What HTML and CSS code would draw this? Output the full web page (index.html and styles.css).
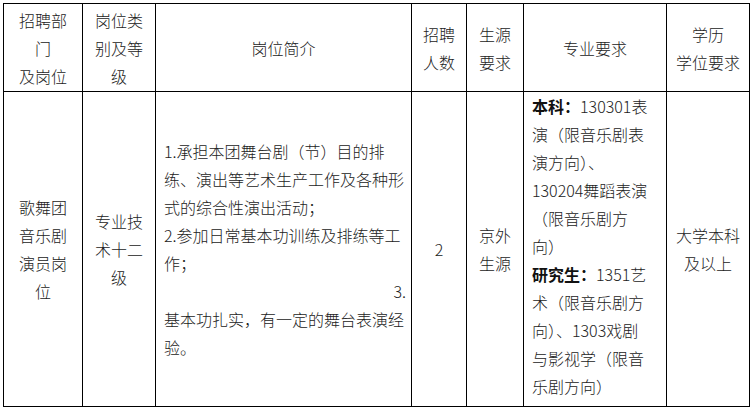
FILE: index.html
```html
<!DOCTYPE html>
<html lang="zh">
<head>
<meta charset="utf-8">
<link rel="stylesheet" href="styles.css">
</head>
<body>
<table class="jobs">
  <colgroup>
    <col class="c1"><col class="c2"><col class="c3"><col class="c4"><col class="c5"><col class="c6"><col class="c7">
  </colgroup>
  <tr class="head">
    <td>招聘部<br>门<br>及岗位</td>
    <td>岗位类<br>别及等<br>级</td>
    <td>岗位简介</td>
    <td>招聘<br>人数</td>
    <td>生源<br>要求</td>
    <td>专业要求</td>
    <td>学历<br>学位要求</td>
  </tr>
  <tr class="body">
    <td>歌舞团<br>音乐剧<br>演员岗<br>位</td>
    <td>专业技<br>术十二<br>级</td>
    <td class="desc">
      <div>1.承担本团舞台剧（节）目的排</div>
      <div>练、演出等艺术生产工作及各种形</div>
      <div>式的综合性演出活动；</div>
      <div>2.参加日常基本功训练及排练等工</div>
      <div>作；</div>
      <div class="right">3.</div>
      <div>基本功扎实，有一定的舞台表演经</div>
      <div>验。</div>
    </td>
    <td>2</td>
    <td>京外<br>生源</td>
    <td class="major">
      <div><b>本科：</b>130301表</div>
      <div>演（限音乐剧表</div>
      <div>演方向）、</div>
      <div>130204舞蹈表演</div>
      <div>（限音乐剧方</div>
      <div>向）</div>
      <div><b>研究生：</b>1351艺</div>
      <div>术（限音乐剧方</div>
      <div>向）、1303戏剧</div>
      <div>与影视学（限音</div>
      <div>乐剧方向）</div>
    </td>
    <td>大学本科<br>及以上</td>
  </tr>
</table>
</body>
</html>
```

FILE: styles.css
```css
html, body {
  margin: 0;
  padding: 0;
  background: #fff;
}
body {
  padding: 3px 0 0 3px;
  font-family: "Noto Sans CJK SC", "Noto Sans", sans-serif;
  font-size: 16px;
  font-weight: 300;
  color: #222;
}
.jobs {
  border-collapse: collapse;
  table-layout: fixed;
  width: 746px;
}
.jobs td {
  border: 1px solid #000;
  padding: 0;
  text-align: center;
  vertical-align: middle;
  line-height: 28px;
  white-space: nowrap;
}
.c1 { width: 79px; }
.c2 { width: 73px; }
.c3 { width: 256px; }
.c4 { width: 55px; }
.c5 { width: 57px; }
.c6 { width: 143px; }
.c7 { width: 83px; }
.head td { height: 87px; }
.body td { height: 314px; }
.jobs td.desc {
  text-align: left;
  padding: 0 5px 0 8px;
}
.desc .right { text-align: right; }
.jobs td.major {
  text-align: left;
  vertical-align: top;
  padding: 0 6px 0 8px;
}
.major b { font-weight: bold; color: #111; }
```
